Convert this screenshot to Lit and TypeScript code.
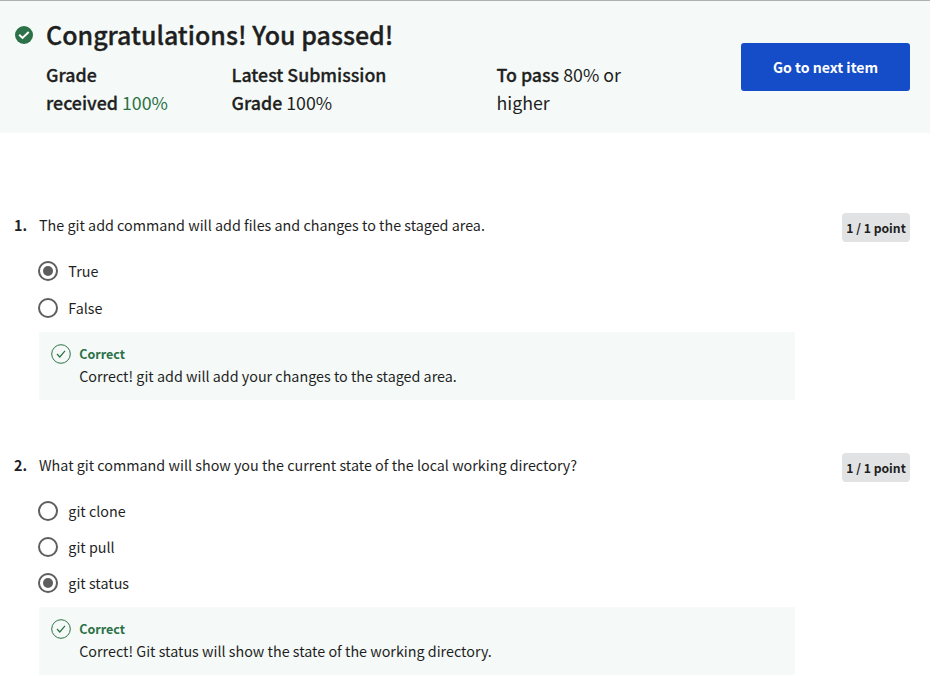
import { LitElement, html, css } from "lit";
import { customElement, property } from "lit/decorators.js";
import { classMap } from "lit/directives/class-map.js";

interface Question {
  number: number;
  prompt: string;
  options: string[];
  selected: number;
  feedback: string;
}

const questions: Question[] = [
  {
    number: 1,
    prompt: "The git add command will add files and changes to the staged area.",
    options: ["True", "False"],
    selected: 0,
    feedback: "Correct! git add will add your changes to the staged area.",
  },
  {
    number: 2,
    prompt: "What git command will show you the current state of the local working directory?",
    options: ["git clone", "git pull", "git status"],
    selected: 2,
    feedback: "Correct! Git status will show the state of the working directory.",
  },
];

@customElement("quiz-question")
class QuizQuestion extends LitElement {
  @property({ attribute: false }) question!: Question;

  static styles = css`
    :host { display: block; }
    .row { display: grid; grid-template-columns: 25px 756px 1fr; padding: 0 20px 0 14px; align-items: start; }
    .num { font-weight: 700; }
    .num, .prompt { line-height: 24px; white-space: nowrap; }
    .points { justify-self: end; width: 68px; height: 29px; box-sizing: border-box; line-height: 31px; text-align: center; background: #e1e2e4; border-radius: 4px; font-size: 12.2px; font-weight: 700; white-space: nowrap; }
    .options { display: flex; flex-direction: column; gap: 12px; margin-top: 22px; }
    .options.pair { gap: 13px; }
    .option { display: flex; align-items: center; height: 24px; gap: 10.3px; line-height: 24px; }
    .radio { width: 20px; height: 20px; box-sizing: border-box; border: 2px solid #5e5e5e; border-radius: 50%; display: grid; place-items: center; margin-left: -1px; }
    .dot { width: 10px; height: 10px; border-radius: 50%; background: #5e5e5e; }
    .feedback { display: flex; gap: 8.2px; margin-top: 12px; height: 68px; box-sizing: border-box; padding: 12px; background: #f5faf8; }
    .check { width: 20px; height: 20px; flex: none; }
    .verdict { color: #2c7147; font-size: 12.5px; font-weight: 700; line-height: 20px; }
    .message { line-height: 24px; }
  `;

  render() {
    const q = this.question;
    return html`
      <div class="row">
        <div class="num">${q.number}.</div>
        <div>
          <div class="prompt">${q.prompt}</div>
          <div class=${classMap({ options: true, pair: q.options.length === 2 })}>
            ${q.options.map((o, i) => html`
              <div class="option">
                <span class="radio">${i === q.selected ? html`<span class="dot"></span>` : ""}</span>
                <span>${o}</span>
              </div>`)}
          </div>
          <div class="feedback">
            <svg class="check" viewBox="0 0 20 20" fill="none" stroke="#2c7147">
              <circle cx="10" cy="10" r="9.3" />
              <path d="M6 10 L8.8 13 L14 6.8" stroke-width="1.2" />
            </svg>
            <div>
              <div class="verdict">Correct</div>
              <div class="message">${q.feedback}</div>
            </div>
          </div>
        </div>
        <div class="points">1 / 1 point</div>
      </div>`;
  }
}

@customElement("app-root")
class AppRoot extends LitElement {
  static styles = css`
    :host { display: block; height: 682px; overflow: hidden; background: #fff; color: #1f1f1f; font-family: "Noto Sans CJK SC", "Noto Sans", sans-serif; font-size: 14.33px; }
    .banner { display: flex; justify-content: space-between; height: 133px; box-sizing: border-box; border-top: 1px solid #b0b0b0; background: #f5faf8; padding: 0 20px 0 15px; }
    .result { display: grid; grid-template-columns: 31px 1fr; align-content: start; padding-top: 13px; }
    .badge { width: 18px; height: 18px; margin-top: 12px; }
    .title { margin: 0; font-size: 25px; font-weight: 500; line-height: 40px; white-space: nowrap; -webkit-text-stroke: 0.35px currentColor; }
    .grades { grid-column: 2; display: grid; grid-template-columns: 185.5px 265px 160px; font-size: 17.8px; line-height: 28px; margin-top: 6px; white-space: nowrap; }
    .strong { font-weight: 500; -webkit-text-stroke: 0.3px currentColor; }
    .green { color: #2c7147; }
    .next { width: 169px; height: 48px; margin-top: 42px; border: 0; border-radius: 3px; background: #154dc8; color: #fff; font: inherit; font-size: 14.1px; font-weight: 700; padding: 0; }
    .questions { display: flex; flex-direction: column; gap: 53px; padding-top: 80px; }
  `;

  render() {
    return html`
      <header class="banner">
        <div class="result">
          <svg class="badge" viewBox="0 0 18 18">
            <circle cx="9" cy="9" r="9" fill="#2c7147" />
            <path d="M4.2 8.8 L7.5 11.9 L13.7 6" fill="none" stroke="#fff" stroke-width="2" />
          </svg>
          <h1 class="title">Congratulations! You passed!</h1>
          <div class="grades">
            <div><span class="strong">Grade<br />received</span> <span class="green">100%</span></div>
            <div><span class="strong">Latest Submission<br />Grade</span> 100%</div>
            <div><span class="strong">To pass</span> 80% or<br />higher</div>
          </div>
        </div>
        <button class="next">Go to next item</button>
      </header>
      <main class="questions">
        ${questions.map((q) => html`<quiz-question .question=${q}></quiz-question>`)}
      </main>`;
  }
}
